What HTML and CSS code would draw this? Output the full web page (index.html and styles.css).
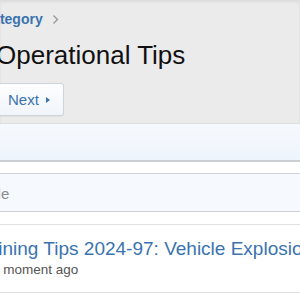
FILE: index.html
```html
<!DOCTYPE html>
<html lang="en">
<head>
  <meta charset="UTF-8">
  <title>Operational Tips</title>
  <link rel="stylesheet" href="styles.css">
</head>
<body>
  <div class="head">
    <div class="page">
      <div class="crumbs">
        <a href="#">Category</a>
        <svg class="chev" width="7" height="11" viewBox="0 0 7 11"><path d="M1.5 1.5 L5.5 5.5 L1.5 9.5" fill="none" stroke="#9a9a9a" stroke-width="1.4"/></svg>
      </div>
      <h1>Operational Tips</h1>
      <a href="#" class="btn">Next <span class="tri"></span></a>
    </div>
  </div>

  <div class="band bar"></div>
  <div class="gap"></div>
  <div class="band filter"><span class="ph">Title</span></div>
  <div class="gap2"></div>

  <div class="row">
    <a href="#" class="topic">Training Tips 2024-97: Vehicle Explosion Safety</a>
    <div class="meta">
      <svg width="14" height="14" viewBox="0 0 14 14"><circle cx="7" cy="7" r="5.5" fill="none" stroke="#888" stroke-width="1.2"/><path d="M7 4v3.2l2 1.3" fill="none" stroke="#888" stroke-width="1.2"/></svg>
      <span>a moment ago</span>
    </div>
  </div>
</body>
</html>
```

FILE: styles.css
```css
html {background:#fff;}
body {margin:0; font-family:"Liberation Sans", Arial, sans-serif; color:#1a1a1a;}
a {text-decoration:none; color:#3a73af;}

.head {background:#ebebeb; padding:10px 0 7px; box-shadow:inset 0 2px 3px rgba(0,0,0,0.07);}
.page {margin-left:-28px;}

.crumbs {display:flex; align-items:center; padding-left:10px; font-size:14px; line-height:18px; font-weight:bold;}
.chev {margin-left:9px;}

h1 {margin:10.5px 0 0; padding-left:24px; font-size:26px; line-height:32px; font-weight:normal; color:#111;}

.btn {display:inline-flex; align-items:center; margin-top:12.5px; padding:7px 13px 7px 35px; font-size:15px; line-height:17px;
  background:linear-gradient(#fdfeff,#f1f5fa); border:1px solid #cdd4dc; border-radius:3px; box-shadow:0 1px 1px rgba(0,0,0,0.05);}
.tri {width:0; height:0; margin-left:7px; border-left:4px solid #3a73af; border-top:3px solid transparent; border-bottom:3px solid transparent;}

.band {margin-left:-28px;}
.bar {height:36px; background:linear-gradient(#f6f9fd,#eef4fc); border-top:1px solid #dcdfe2; border-bottom:2px solid #cbcfd3;}
.gap {height:11px;}
.filter {height:37px; display:flex; align-items:center; padding-left:9.5px; background:#f6f9fd; border-top:1px solid #cfd3d7; border-bottom:1px solid #cdd1d5;}
.ph {font-size:15px; line-height:17px; color:#8c8c8c; margin-top:2px;}
.gap2 {height:12px;}

.row {margin-left:-30px; padding:12.7px 0 12.5px 0.5px; border-top:1px solid #e0e2e4; border-bottom:1px solid #dcdee0; white-space:nowrap;}
.topic {display:block; font-size:19px; line-height:22px;}
.meta {display:flex; align-items:center; gap:7.5px; margin-top:1.8px; font-size:13.5px; line-height:18px; color:#555;}
```
